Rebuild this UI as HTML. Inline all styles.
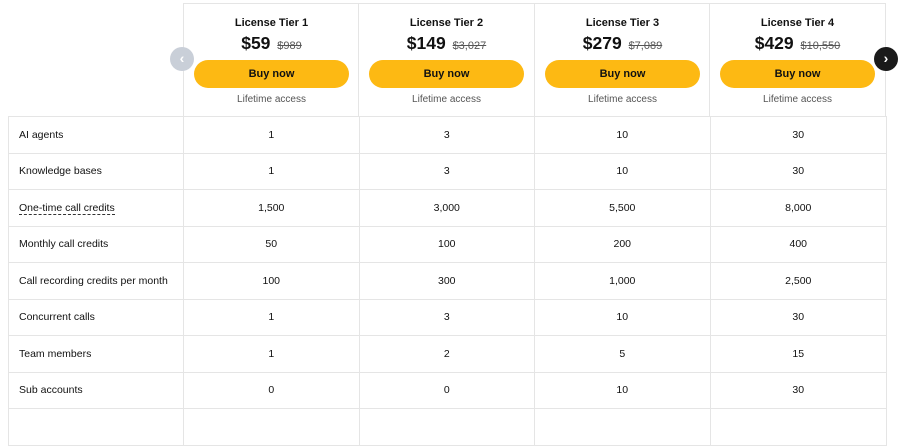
<!DOCTYPE html>
<html><head><style>
*{box-sizing:border-box;margin:0;padding:0}
body{width:900px;height:411px;background:#fff;font-family:"Liberation Sans",Arial,sans-serif;color:#111;position:relative;overflow:hidden}
.h{position:absolute;top:3px;height:114px;border:1px solid #e5e5e5;border-right:none;text-align:center}
.h .t{position:absolute;top:13px;left:0;right:0;font-size:11px;font-weight:bold;color:#111}
.h .p{position:absolute;top:29px;left:0;right:0;font-size:17.5px;font-weight:bold;color:#111}
.h .p s{font-size:11px;font-weight:normal;color:#555;margin-left:2px}
.h .b{position:absolute;top:56px;left:10px;right:10px;height:28px;border-radius:14px;background:#fdb913;font-size:11px;font-weight:bold;line-height:28px;color:#111}
.h .l{position:absolute;top:90px;left:0;right:0;font-size:10px;color:#555}
table{position:absolute;top:116px;left:8px;border-collapse:collapse;width:878px;table-layout:fixed}
td{border:1px solid #e5e5e5;height:36.5px;font-size:10.5px;text-align:center;color:#111}
td:first-child{text-align:left;padding-left:10px}
.c{position:absolute;width:24px;height:24px;border-radius:12px;top:47px;color:#fff;font-size:14px;line-height:22px;text-align:center;font-weight:bold}
</style></head><body>
<div class="h" style="left:183px;width:176px"><div class="t">License Tier 1</div><div class="p">$59 <s>$989</s></div><div class="b">Buy now</div><div class="l">Lifetime access</div></div>
<div class="h" style="left:358px;width:176px"><div class="t">License Tier 2</div><div class="p">$149 <s>$3,027</s></div><div class="b">Buy now</div><div class="l">Lifetime access</div></div>
<div class="h" style="left:534px;width:176px"><div class="t">License Tier 3</div><div class="p">$279 <s>$7,089</s></div><div class="b">Buy now</div><div class="l">Lifetime access</div></div>
<div class="h" style="left:709px;width:177px;border-right:1px solid #e5e5e5"><div class="t">License Tier 4</div><div class="p">$429 <s>$10,550</s></div><div class="b">Buy now</div><div class="l">Lifetime access</div></div>
<div class="c" style="left:170px;background:#c9cfd8">‹</div>
<div class="c" style="left:874px;background:#1a1a1a">›</div>
<table>
<colgroup><col style="width:175px"><col style="width:175.5px"><col style="width:175.5px"><col style="width:175.5px"><col style="width:176.5px"></colgroup>
<tr><td>AI agents</td><td>1</td><td>3</td><td>10</td><td>30</td></tr>
<tr><td>Knowledge bases</td><td>1</td><td>3</td><td>10</td><td>30</td></tr>
<tr><td><span style="border-bottom:1px dashed #333">One-time call credits</span></td><td>1,500</td><td>3,000</td><td>5,500</td><td>8,000</td></tr>
<tr><td>Monthly call credits</td><td>50</td><td>100</td><td>200</td><td>400</td></tr>
<tr><td>Call recording credits per month</td><td>100</td><td>300</td><td>1,000</td><td>2,500</td></tr>
<tr><td>Concurrent calls</td><td>1</td><td>3</td><td>10</td><td>30</td></tr>
<tr><td>Team members</td><td>1</td><td>2</td><td>5</td><td>15</td></tr>
<tr><td>Sub accounts</td><td>0</td><td>0</td><td>10</td><td>30</td></tr>
<tr><td>&nbsp;</td><td></td><td></td><td></td><td></td></tr>
</table>
</body></html>
